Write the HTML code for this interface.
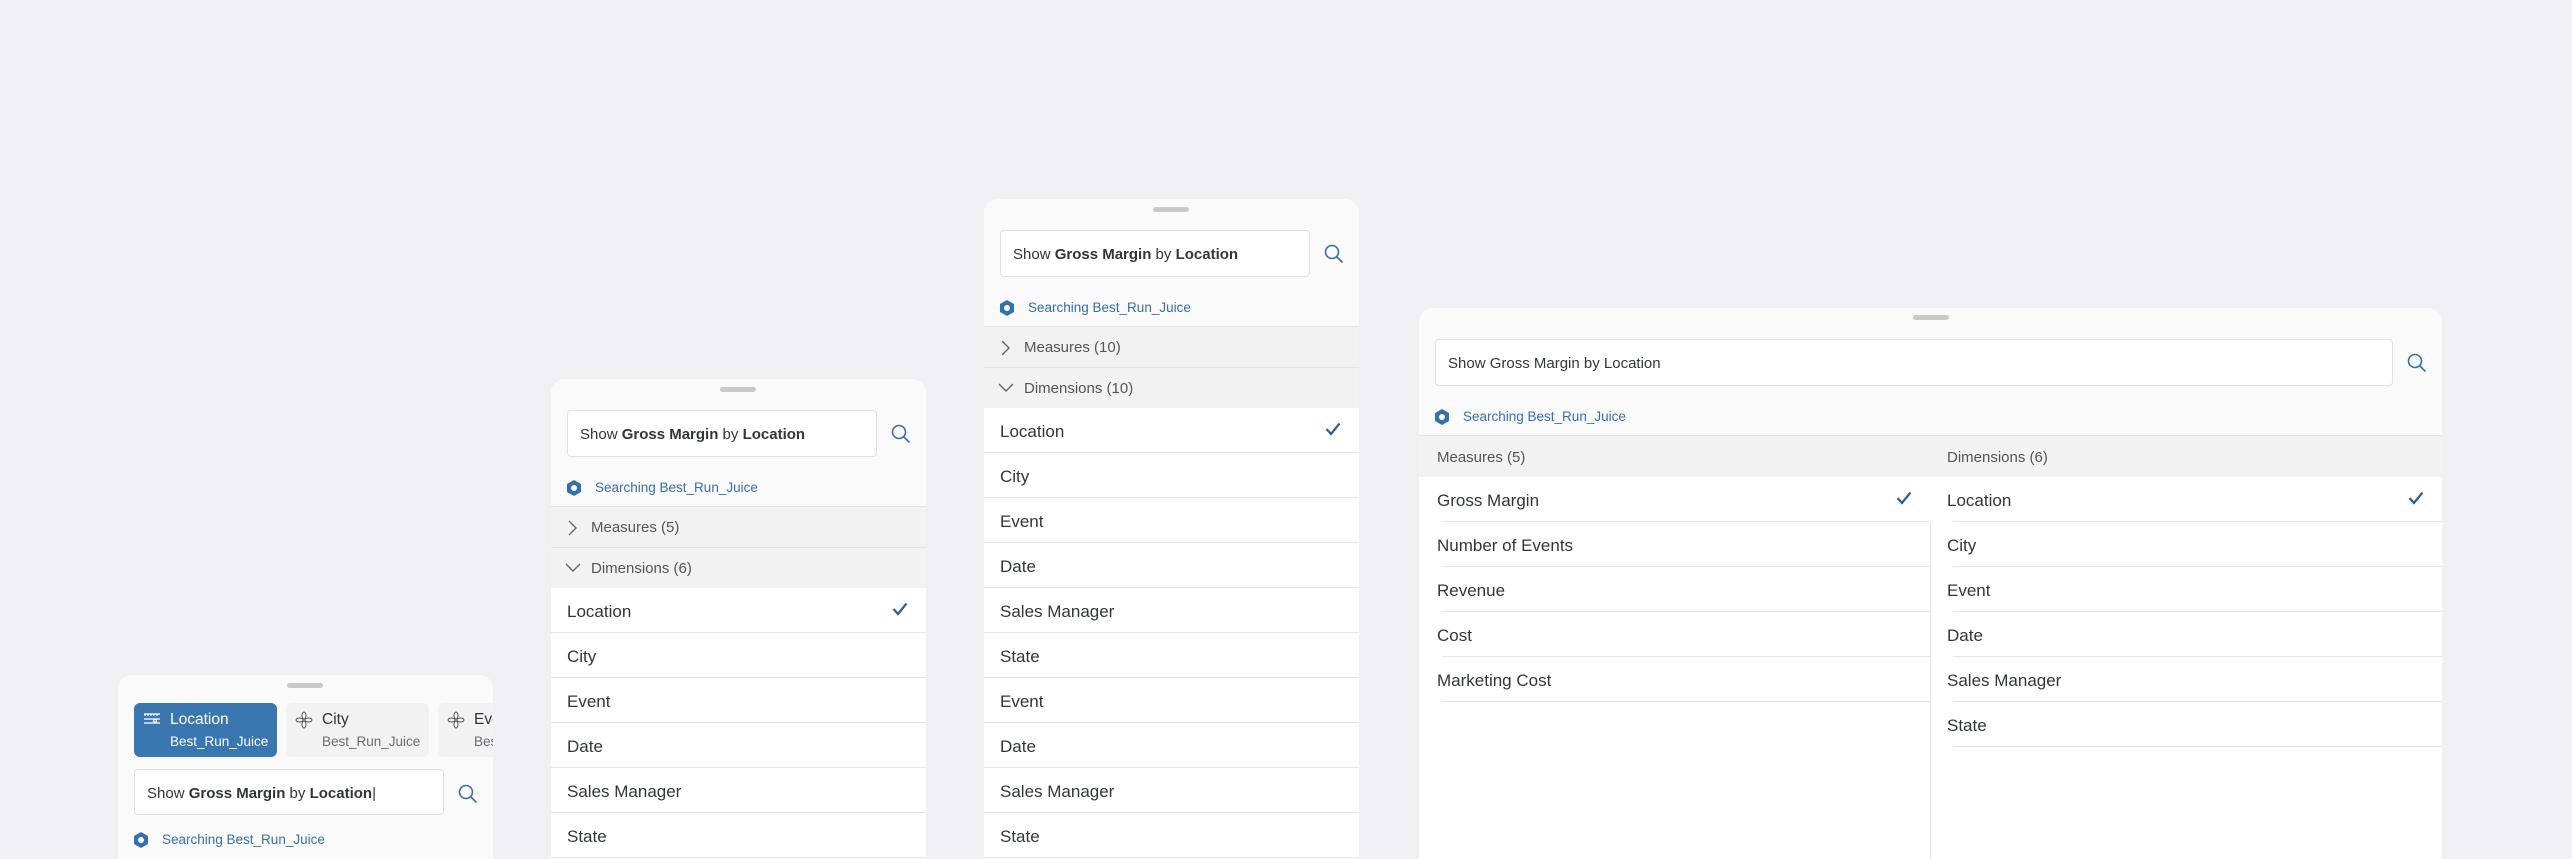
<!DOCTYPE html>
<html><head><meta charset="utf-8"><style>
*{box-sizing:border-box;margin:0;padding:0}
body{width:2572px;height:859px;background:#efeff4;position:relative;overflow:hidden;font-family:"Liberation Sans",sans-serif;color:#32363a}
.p{position:absolute;background:#fff;border-radius:14px 14px 0 0;overflow:hidden}
.top{position:absolute;left:0;right:0;top:0;background:#fafafa}
.h{position:absolute;width:36px;height:5px;border-radius:3px;background:#c9c9c9}
.inp{position:absolute;background:#fff;border:1px solid #e0e0e0;border-radius:4px;font-size:15px;line-height:47px;padding-left:12px;color:#32363a;white-space:nowrap}
.inp b{font-weight:bold}
.srch{position:absolute;font-size:13.5px;color:#346fb0;white-space:nowrap}
.srch svg{position:absolute;left:-29px;top:-1px}
.grp{position:absolute;left:0;right:0;height:41px;background:#f2f2f2;border-top:1px solid #e3e3e3;font-size:15px;line-height:42px;color:#555;padding-left:40px}
.grp svg{position:absolute;left:14px;top:13px}
.row{position:absolute;left:0;right:0;height:45px;border-bottom:1px solid #e5e5e5;font-size:17px;line-height:47px;padding-left:16px}
.ck{position:absolute;right:18px;top:14px}
.mag{position:absolute}
</style></head><body>

<!-- Panel 1 -->
<div class="p" style="left:118px;top:675px;width:375px;height:184px">
  <div class="top" style="height:184px"></div>
  <div class="h" style="left:169px;top:8px"></div>
  <div style="position:absolute;left:16px;top:28px;width:143px;height:54px;background:#3a76b0;border-radius:6px;color:#fff">
    <svg style="position:absolute;left:9px;top:10px" width="18" height="12" viewBox="0 0 18 12" fill="none" stroke="#fff" stroke-width="1.2"><path d="M1 1H17M2 1V3M5 1V3M8 1V3M11 1V3M14 1V3M1 6H17M1 10H17"/><circle cx="12" cy="8" r="1.5"/></svg>
    <div style="position:absolute;left:36px;top:8px;font-size:15.5px">Location</div>
    <div style="position:absolute;left:36px;top:31px;font-size:13.5px">Best_Run_Juice</div>
  </div>
  <div style="position:absolute;left:168px;top:28px;width:143px;height:54px;background:#f2f2f2;border-radius:6px">
    <svg style="position:absolute;left:9px;top:8px" width="18" height="18" viewBox="0 0 18 18" fill="none" stroke="#555" stroke-width="1"><ellipse cx="9" cy="4.5" rx="2" ry="3.5"/><ellipse cx="9" cy="13.5" rx="2" ry="3.5"/><ellipse cx="4.5" cy="9" rx="3.5" ry="2"/><ellipse cx="13.5" cy="9" rx="3.5" ry="2"/></svg>
    <div style="position:absolute;left:36px;top:8px;font-size:15.5px">City</div>
    <div style="position:absolute;left:36px;top:31px;font-size:13.5px;color:#6a6d70">Best_Run_Juice</div>
  </div>
  <div style="position:absolute;left:320px;top:28px;width:143px;height:54px;background:#f2f2f2;border-radius:6px">
    <svg style="position:absolute;left:9px;top:8px" width="18" height="18" viewBox="0 0 18 18" fill="none" stroke="#555" stroke-width="1"><ellipse cx="9" cy="4.5" rx="2" ry="3.5"/><ellipse cx="9" cy="13.5" rx="2" ry="3.5"/><ellipse cx="4.5" cy="9" rx="3.5" ry="2"/><ellipse cx="13.5" cy="9" rx="3.5" ry="2"/></svg>
    <div style="position:absolute;left:36px;top:8px;font-size:15.5px">Event</div>
    <div style="position:absolute;left:36px;top:31px;font-size:13.5px;color:#6a6d70">Best_Run_Juice</div>
  </div>
  <div class="inp" style="left:16px;top:94px;width:310px;height:46px">Show <b>Gross Margin</b> by <b>Location</b>|</div>
  <svg class="mag" style="left:340px;top:109px" width="20" height="20" viewBox="0 0 20 20" fill="none" stroke="#346fb0" stroke-width="1.6"><circle cx="8" cy="8" r="6.5"/><path d="M12.8 12.8L18.5 18.5"/></svg>
  <div class="srch" style="left:44px;top:157px">
    <svg width="16" height="18" viewBox="0 0 16 18"><path d="M8 1L15 5V13L8 17L1 13V5Z" fill="#346fb0"/><circle cx="8" cy="9" r="3" fill="#fff"/></svg>Searching Best_Run_Juice</div>
</div>

<!-- Panel 2 -->
<div class="p" style="left:551px;top:379px;width:375px;height:480px">
  <div class="top" style="height:127px"></div>
  <div class="h" style="left:169px;top:8px"></div>
  <div class="inp" style="left:16px;top:31px;width:310px;height:47px">Show <b>Gross Margin</b> by <b>Location</b></div>
  <svg class="mag" style="left:340px;top:45px" width="20" height="20" viewBox="0 0 20 20" fill="none" stroke="#346fb0" stroke-width="1.6"><circle cx="8" cy="8" r="6.5"/><path d="M12.8 12.8L18.5 18.5"/></svg>
  <div class="srch" style="left:44px;top:101px"><svg width="16" height="18" viewBox="0 0 16 18"><path d="M8 1L15 5V13L8 17L1 13V5Z" fill="#346fb0"/><circle cx="8" cy="9" r="3" fill="#fff"/></svg>Searching Best_Run_Juice</div>
  <div class="grp" style="top:127px"><svg width="14" height="16" viewBox="0 0 14 16" fill="none" stroke="#666" stroke-width="1.4"><path d="M4 1L11 8L4 15"/></svg>Measures (5)</div>
  <div class="grp" style="top:168px"><svg width="16" height="14" viewBox="0 0 16 14" fill="none" stroke="#666" stroke-width="1.4"><path d="M1 3L8 10L15 3"/></svg>Dimensions (6)</div>
  <div class="row" style="top:209px">Location<svg class="ck" width="16" height="14" viewBox="0 0 16 14" fill="none" stroke="#2d5f94" stroke-width="2.2"><path d="M1.5 7L6 12L14.5 1.5"/></svg></div>
  <div class="row" style="top:254px">City</div>
  <div class="row" style="top:299px">Event</div>
  <div class="row" style="top:344px">Date</div>
  <div class="row" style="top:389px">Sales Manager</div>
  <div class="row" style="top:434px">State</div>
</div>

<!-- Panel 3 -->
<div class="p" style="left:984px;top:199px;width:375px;height:660px">
  <div class="top" style="height:127px"></div>
  <div class="h" style="left:169px;top:8px"></div>
  <div class="inp" style="left:16px;top:31px;width:310px;height:47px">Show <b>Gross Margin</b> by <b>Location</b></div>
  <svg class="mag" style="left:340px;top:45px" width="20" height="20" viewBox="0 0 20 20" fill="none" stroke="#346fb0" stroke-width="1.6"><circle cx="8" cy="8" r="6.5"/><path d="M12.8 12.8L18.5 18.5"/></svg>
  <div class="srch" style="left:44px;top:101px"><svg width="16" height="18" viewBox="0 0 16 18"><path d="M8 1L15 5V13L8 17L1 13V5Z" fill="#346fb0"/><circle cx="8" cy="9" r="3" fill="#fff"/></svg>Searching Best_Run_Juice</div>
  <div class="grp" style="top:127px"><svg width="14" height="16" viewBox="0 0 14 16" fill="none" stroke="#666" stroke-width="1.4"><path d="M4 1L11 8L4 15"/></svg>Measures (10)</div>
  <div class="grp" style="top:168px"><svg width="16" height="14" viewBox="0 0 16 14" fill="none" stroke="#666" stroke-width="1.4"><path d="M1 3L8 10L15 3"/></svg>Dimensions (10)</div>
  <div class="row" style="top:209px">Location<svg class="ck" width="16" height="14" viewBox="0 0 16 14" fill="none" stroke="#2d5f94" stroke-width="2.2"><path d="M1.5 7L6 12L14.5 1.5"/></svg></div>
  <div class="row" style="top:254px">City</div>
  <div class="row" style="top:299px">Event</div>
  <div class="row" style="top:344px">Date</div>
  <div class="row" style="top:389px">Sales Manager</div>
  <div class="row" style="top:434px">State</div>
  <div class="row" style="top:479px">Event</div>
  <div class="row" style="top:524px">Date</div>
  <div class="row" style="top:569px">Sales Manager</div>
  <div class="row" style="top:614px">State</div>
</div>

<!-- Panel 4 -->
<div class="p" style="left:1419px;top:308px;width:1023px;height:551px">
  <div class="top" style="height:128px"></div>
  <div class="h" style="left:494px;top:7px"></div>
  <div class="inp" style="left:16px;top:31px;width:958px;height:47px">Show Gross Margin by Location</div>
  <svg class="mag" style="left:988px;top:45px" width="20" height="20" viewBox="0 0 20 20" fill="none" stroke="#346fb0" stroke-width="1.6"><circle cx="8" cy="8" r="6.5"/><path d="M12.8 12.8L18.5 18.5"/></svg>
  <div class="srch" style="left:44px;top:101px"><svg width="16" height="18" viewBox="0 0 16 18"><path d="M8 1L15 5V13L8 17L1 13V5Z" fill="#346fb0"/><circle cx="8" cy="9" r="3" fill="#fff"/></svg>Searching Best_Run_Juice</div>
  <div style="position:absolute;left:0;right:0;top:127px;height:42px;background:#f2f2f2;border-top:1px solid #e3e3e3;font-size:15px;line-height:44px;color:#555">
    <span style="position:absolute;left:18px">Measures (5)</span><span style="position:absolute;left:528px">Dimensions (6)</span></div>
  <div style="position:absolute;left:511px;top:214px;bottom:0;width:1px;background:#e5e5e5"></div>
  <div style="position:absolute;left:0;top:169px;width:511px">
    <div class="row" style="top:0;border:0;padding-left:18px">Gross Margin<svg class="ck" width="16" height="14" viewBox="0 0 16 14" fill="none" stroke="#2d5f94" stroke-width="2.2"><path d="M1.5 7L6 12L14.5 1.5"/></svg></div>
    <div style="position:absolute;left:23px;right:0;top:44px;height:1px;background:#e5e5e5"></div>
    <div class="row" style="top:45px;border:0;padding-left:18px">Number of Events</div>
    <div style="position:absolute;left:23px;right:0;top:89px;height:1px;background:#e5e5e5"></div>
    <div class="row" style="top:90px;border:0;padding-left:18px">Revenue</div>
    <div style="position:absolute;left:23px;right:0;top:134px;height:1px;background:#e5e5e5"></div>
    <div class="row" style="top:135px;border:0;padding-left:18px">Cost</div>
    <div style="position:absolute;left:23px;right:0;top:179px;height:1px;background:#e5e5e5"></div>
    <div class="row" style="top:180px;border:0;padding-left:18px">Marketing Cost</div>
    <div style="position:absolute;left:23px;right:0;top:224px;height:1px;background:#e5e5e5"></div>
  </div>
  <div style="position:absolute;left:512px;top:169px;width:511px">
    <div class="row" style="top:0;border:0;padding-left:16px">Location<svg class="ck" width="16" height="14" viewBox="0 0 16 14" fill="none" stroke="#2d5f94" stroke-width="2.2"><path d="M1.5 7L6 12L14.5 1.5"/></svg></div>
    <div style="position:absolute;left:22px;right:0;top:44px;height:1px;background:#e5e5e5"></div>
    <div class="row" style="top:45px;border:0;padding-left:16px">City</div>
    <div style="position:absolute;left:22px;right:0;top:89px;height:1px;background:#e5e5e5"></div>
    <div class="row" style="top:90px;border:0;padding-left:16px">Event</div>
    <div style="position:absolute;left:22px;right:0;top:134px;height:1px;background:#e5e5e5"></div>
    <div class="row" style="top:135px;border:0;padding-left:16px">Date</div>
    <div style="position:absolute;left:22px;right:0;top:179px;height:1px;background:#e5e5e5"></div>
    <div class="row" style="top:180px;border:0;padding-left:16px">Sales Manager</div>
    <div style="position:absolute;left:22px;right:0;top:224px;height:1px;background:#e5e5e5"></div>
    <div class="row" style="top:225px;border:0;padding-left:16px">State</div>
    <div style="position:absolute;left:22px;right:0;top:269px;height:1px;background:#e5e5e5"></div>
  </div>
</div>
</body></html>
